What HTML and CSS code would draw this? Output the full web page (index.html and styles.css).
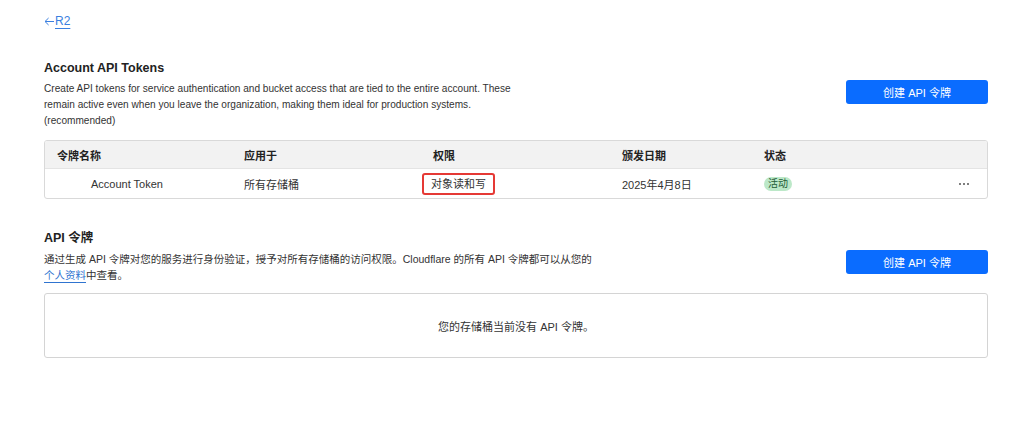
FILE: index.html
```html
<!DOCTYPE html>
<html lang="zh-CN">
<head>
  <meta charset="UTF-8" />
  <title>R2 API Tokens</title>
  <link rel="stylesheet" href="styles.css">
</head>
<body>
  <div class="page">
    <a class="back" href="#">
      <svg width="10" height="9" viewBox="0 0 10 9"><path d="M10 4.5H1.2M4.6 1L1 4.5 4.6 8" fill="none" stroke="currentColor" stroke-width="1"/></svg><span>R2</span>
    </a>

    <section class="section first">
      <div class="section-head">
        <div class="intro">
          <h3>Account API Tokens</h3>
          <p class="en">Create API tokens for service authentication and bucket access that are tied to the entire account. These<br>remain active even when you leave the organization, making them ideal for production systems.<br>(recommended)</p>
        </div>
        <button class="btn">创建 API 令牌</button>
      </div>

      <div class="table">
        <div class="row head">
          <div>令牌名称</div>
          <div>应用于</div>
          <div>权限</div>
          <div>颁发日期</div>
          <div>状态</div>
          <div></div>
        </div>
        <div class="row">
          <div class="name">Account Token</div>
          <div>所有存储桶</div>
          <div><span class="marked">对象读和写</span></div>
          <div>2025年4月8日</div>
          <div><span class="badge">活动</span></div>
          <div class="more"><i></i><i></i><i></i></div>
        </div>
      </div>
    </section>

    <section class="section">
      <div class="section-head">
        <div class="intro">
          <h3>API 令牌</h3>
          <p>通过生成 API 令牌对您的服务进行身份验证，授予对所有存储桶的访问权限。Cloudflare 的所有 API 令牌都可以从您的<br><a href="#">个人资料</a>中查看。</p>
        </div>
        <button class="btn">创建 API 令牌</button>
      </div>

      <div class="empty">您的存储桶当前没有 API 令牌。</div>
    </section>
  </div>
</body>
</html>
```

FILE: styles.css
```css
body {
  margin: 0;
  background: #fff;
  font-family: "Liberation Sans", "Noto Sans CJK SC", sans-serif;
  font-size: 11px;
  color: #333;
}
.page {
  padding: 12px 36px 0 44px;
}
.back {
  display: inline-flex;
  align-items: center;
  gap: 1px;
  color: #3a7fe0;
  text-decoration: none;
  font-size: 12px;
  line-height: 18px;
}
.back span {
  text-decoration: underline;
  text-underline-offset: 3px;
}
.section {
  margin-top: 30px;
}
.section.first {
  margin-top: 29px;
}
.section-head {
  display: flex;
  justify-content: space-between;
  align-items: flex-start;
}
.intro {
  width: 600px;
}
h3 {
  margin: 0 0 4px;
  font-size: 12.5px;
  font-weight: 700;
  color: #222;
  line-height: 18px;
}
.intro p {
  margin: 0;
  font-size: 10.5px;
  line-height: 16px;
  color: #333;
}
.intro p.en {
  font-size: 10.1px;
}
.intro a {
  color: #2f74d0;
  text-decoration: underline;
  text-underline-offset: 3px;
}
.btn {
  margin-top: 21px;
  width: 142px;
  height: 24px;
  background: #0a6cff;
  color: #fff;
  border: none;
  border-radius: 3px;
  font-family: inherit;
  font-size: 11px;
  cursor: pointer;
}
.table {
  margin-top: 11px;
  border: 1px solid #d9d9d9;
  border-radius: 3px;
  overflow: hidden;
}
.row {
  display: grid;
  grid-template-columns: 187px 189px 189px 142px 1fr 40px;
  align-items: center;
  height: 29px;
  padding-left: 12px;
}
.row.head {
  height: 27px;
  background: #f2f2f2;
  border-bottom: 1px solid #e4e4e4;
  font-weight: 700;
  color: #222;
}
.row .name {
  padding-left: 34px;
}
.marked {
  display: inline-block;
  margin-left: -11px;
  padding: 2px 7px 1px;
  border: 2px solid #e53935;
  border-radius: 3px;
  line-height: 15px;
}
.badge {
  display: inline-block;
  padding: 0 4px;
  background: #bce8c8;
  color: #245c36;
  border-radius: 7px;
  font-size: 10px;
  line-height: 14px;
}
.more {
  display: flex;
  gap: 2px;
  padding-left: 12px;
}
.more i {
  width: 2px;
  height: 2px;
  border-radius: 50%;
  background: #555;
}
.empty {
  margin-top: 10px;
  height: 63px;
  border: 1px solid #d4d4d4;
  border-radius: 3px;
  display: flex;
  align-items: center;
  justify-content: center;
  color: #333;
}
```
